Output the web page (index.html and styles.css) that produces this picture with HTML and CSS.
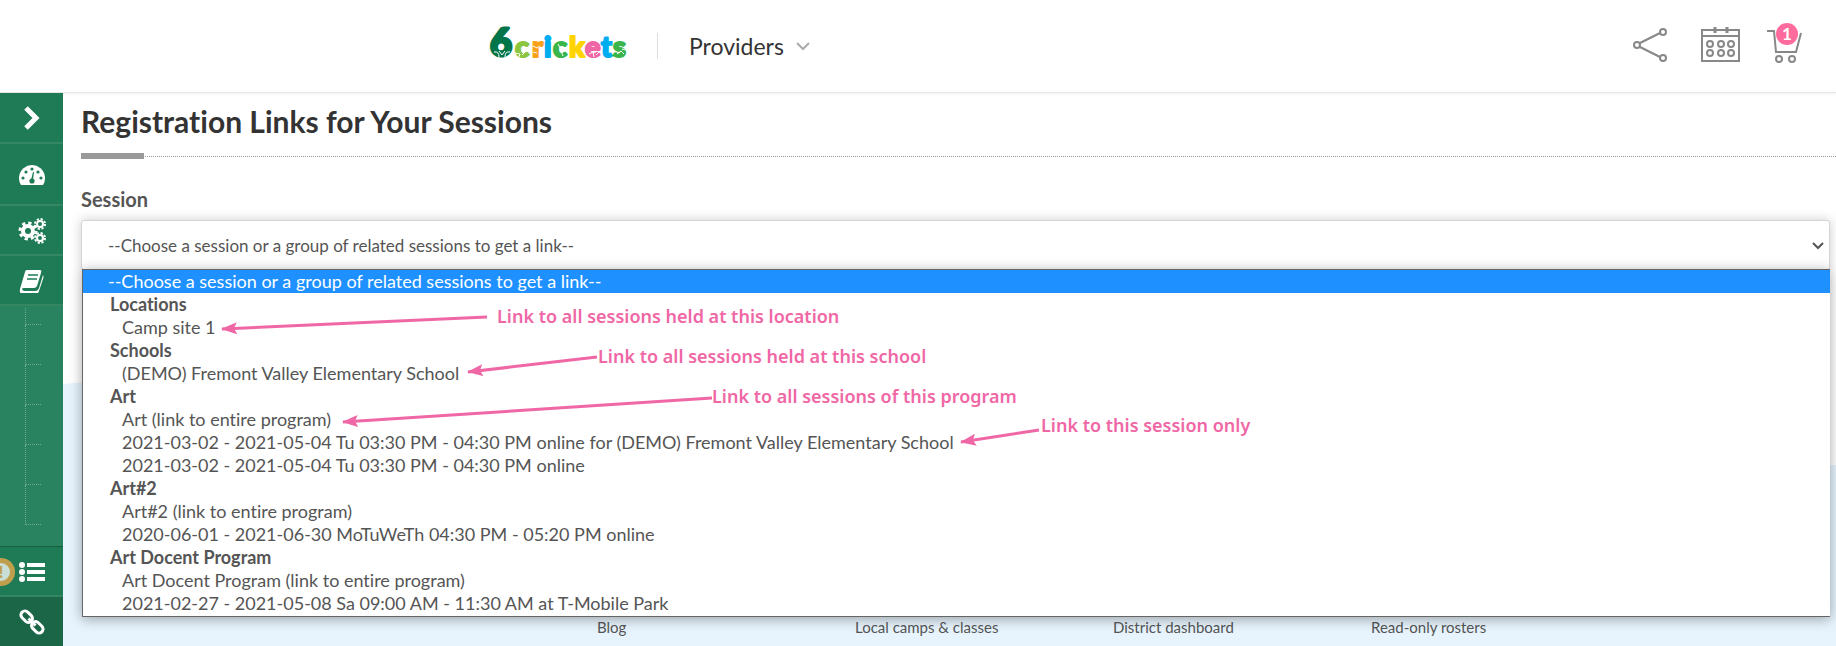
FILE: index.html
```
<!DOCTYPE html>
<html lang="en">
<head>
	<meta charset="utf-8">
	<title>Registration Links for Your Sessions</title>
	<link rel="stylesheet" href="styles.css">
</head>
<body>
<header class="header">
	<a class="logo" href="#" aria-label="6crickets">
		<svg width="138" height="50" viewBox="0 0 138 50">
			<g class="logo-text">
				<text class="logo-six" x="0" y="38">6</text>
				<text x="25" y="39" fill="#8cc63f" stroke="#8cc63f">c</text>
				<text x="42" y="39" fill="#f9a11b" stroke="#f9a11b">r</text>
				<text x="54" y="39" fill="#00aeef" stroke="#00aeef">i</text>
				<text x="63" y="39" fill="#39b54a" stroke="#39b54a">c</text>
				<text x="79" y="39" fill="#ffd400" stroke="#ffd400">k</text>
				<text x="95" y="39" fill="#f067a6" stroke="#f067a6">e</text>
				<text x="111" y="39" fill="#00aeef" stroke="#00aeef">t</text>
				<text x="123" y="39" fill="#39b54a" stroke="#39b54a">s</text>
			</g>
			<g fill="none" stroke="#fff" stroke-width="1">
				<path d="M4 34q5-1 5 5M20 34q-5-1-5 5M9 33l3 4 3-4M25 35l5 1-1 3M35 34l-3 3M43 28l4 2 3-2M43 34l4 1M68 26l2 4 4-1M71 33l2 5M99 36l4-2 1 5M106 37l3-3M127 36l4-3 3 3M132 31l4 1"/>
			</g>
		</svg>
	</a>
	<button class="nav-btn" type="button">Providers
		<svg width="14" height="9" viewBox="0 0 14 9"><path d="M1 1l6 6 6-6" fill="none" stroke="#aaa" stroke-width="2"/></svg>
	</button>
	<nav class="tools">
		<a href="#" aria-label="Share">
			<svg width="42" height="38" viewBox="0 0 42 38" fill="none" stroke="#888" stroke-width="2">
				<circle cx="6" cy="19" r="3"/><circle cx="32" cy="6" r="3"/><circle cx="32" cy="32" r="3"/>
				<path d="M9 17l20-10M9 21l20 10"/>
			</svg>
		</a>
		<a href="#" aria-label="Calendar">
			<svg width="40" height="38" viewBox="0 0 40 38" fill="none" stroke="#888" stroke-width="2">
				<path d="M2 4h37v31H2zM2 10h37"/>
				<path d="M15 1v6M27 1v6" stroke-width="3"/>
				<circle cx="10" cy="18" r="3"/><circle cx="21" cy="18" r="3"/><circle cx="31" cy="18" r="3"/>
				<circle cx="10" cy="27" r="3"/><circle cx="21" cy="27" r="3"/><circle cx="31" cy="27" r="3"/>
			</svg>
		</a>
		<a class="cart" href="#" aria-label="Cart">
			<svg width="36" height="38" viewBox="0 0 36 38" fill="none" stroke="#888" stroke-width="2">
				<path d="M0 5h7l2 21h20l5-19"/>
				<circle cx="12" cy="33" r="3"/><circle cx="25" cy="33" r="3"/>
			</svg>
			<span class="count">1</span>
		</a>
	</nav>
</header>

<div class="page">
	<aside class="sidebar">
		<a class="side-item side-first" href="#" aria-label="Expand">
			<svg width="18" height="24" viewBox="0 0 18 24"><path d="M3 2l10 10L3 22" fill="none" stroke="#fff" stroke-width="5"/></svg>
		</a>
		<a class="side-item side-tall" href="#" aria-label="Dashboard">
			<svg width="28" height="22" viewBox="0 0 28 22">
				<path fill="#fff" d="M3 21a13 13 0 1 1 22 0z"/>
				<g fill="#1e7b55"><circle cx="5" cy="14" r="1.6"/><circle cx="8" cy="8" r="1.6"/><circle cx="14" cy="5" r="1.6"/><circle cx="20" cy="8" r="1.6"/><circle cx="23" cy="14" r="1.6"/><circle cx="14" cy="17" r="2.6"/><path d="M13 16l2-8h1l-1 8z"/></g>
			</svg>
		</a>
		<a class="side-item" href="#" aria-label="Settings">
			<svg width="28" height="26" viewBox="0 0 28 26" fill="none" stroke="#fff">
				<circle cx="10" cy="13" r="5" stroke-width="4"/>
				<circle cx="10" cy="13" r="8" stroke-width="3" stroke-dasharray="3.3 2.98"/>
				<g stroke-width="2">
					<circle cx="22" cy="6" r="3"/><circle cx="22" cy="6" r="5" stroke-dasharray="2.2 1.73"/>
					<circle cx="22" cy="20" r="3"/><circle cx="22" cy="20" r="5" stroke-dasharray="2.2 1.73"/>
				</g>
			</svg>
		</a>
		<a class="side-item" href="#" aria-label="Programs">
			<svg width="26" height="24" viewBox="0 0 26 24">
				<path fill="#fff" d="M8 1h13q2 0 1 3l-4 13q-1 2-3 2H5q-2 0-2 1t2 2h12q2 0 3-3l4-13q1 2 0 4l-4 12q-1 3-3 3H4q-4 0-3-5L6 3q0-2 2-2z"/>
				<path d="M9 6h10M8 10h10" stroke="#1e7b55" stroke-width="1.5"/>
			</svg>
		</a>
		<ul class="sub">
			<li></li>
			<li></li>
			<li></li>
			<li></li>
			<li></li>
			<li></li>
		</ul>
		<a class="side-item side-list" href="#" aria-label="Lists">
			<svg width="28" height="22" viewBox="0 0 28 22" fill="#fff">
				<circle cx="4" cy="4" r="3"/><circle cx="4" cy="11" r="3"/><circle cx="4" cy="18" r="3"/>
				<path d="M9 2h18v4H9zM9 9h18v4H9zM9 16h18v4H9z"/>
			</svg>
			<span class="alert">!</span>
		</a>
		<a class="side-item side-active" href="#" aria-label="Links">
			<svg width="26" height="26" viewBox="0 0 26 26" fill="none" stroke="#fff" stroke-width="3">
				<g transform="rotate(45 13 13)"><rect x="-1" y="9" width="13" height="8" rx="4"/><rect x="14" y="9" width="13" height="8" rx="4"/><path d="M8 13h10"/></g>
			</svg>
		</a>
	</aside>

	<main class="main">
		<svg class="wave" viewBox="0 0 1773 264" preserveAspectRatio="none"><path fill="#e7f4fd" d="M0 2C300-30 1200 83 1773 83V264H0z"/></svg>
		<h1>Registration Links for Your Sessions</h1>
		<form class="field">
			<label for="session">Session</label>
			<div class="select-wrap">
				<select id="session">
					<option>--Choose a session or a group of related sessions to get a link--</option>
				</select>
				<svg class="arrow" width="12" height="8" viewBox="0 0 12 8"><path d="M1 1l5 5 5-5" fill="none" stroke="#555" stroke-width="2"/></svg>

				<div class="menu">
					<ul>
						<li class="opt on">--Choose a session or a group of related sessions to get a link--</li>
						<li class="group">Locations</li>
						<li class="opt">Camp site 1</li>
						<li class="group">Schools</li>
						<li class="opt">(DEMO) Fremont Valley Elementary School</li>
						<li class="group">Art</li>
						<li class="opt">Art (link to entire program)</li>
						<li class="opt">2021-03-02 - 2021-05-04 Tu 03:30 PM - 04:30 PM online for (DEMO) Fremont Valley Elementary School</li>
						<li class="opt">2021-03-02 - 2021-05-04 Tu 03:30 PM - 04:30 PM online</li>
						<li class="group">Art#2</li>
						<li class="opt">Art#2 (link to entire program)</li>
						<li class="opt">2020-06-01 - 2021-06-30 MoTuWeTh 04:30 PM - 05:20 PM online</li>
						<li class="group">Art Docent Program</li>
						<li class="opt">Art Docent Program (link to entire program)</li>
						<li class="opt">2021-02-27 - 2021-05-08 Sa 09:00 AM - 11:30 AM at T-Mobile Park</li>
					</ul>
					<!-- notes over the list -->
					<svg class="notes" width="1200" height="345" viewBox="0 0 1200 345">
						<defs>
							<marker id="tip" markerUnits="userSpaceOnUse" markerWidth="18" markerHeight="14" refX="15" refY="6" orient="auto">
								<path d="M0 0l16 6-16 6 3-6z" fill="#f067a6"/>
							</marker>
						</defs>
						<g stroke="#f067a6" stroke-width="3">
							<path d="M404 47L139 59" marker-end="url(#tip)"/>
							<path d="M514 87L385 102" marker-end="url(#tip)"/>
							<path d="M629 128L260 152" marker-end="url(#tip)"/>
							<path d="M956 160L878 172" marker-end="url(#tip)"/>
						</g>
						<text x="414" y="53">Link to all sessions held at this location</text>
						<text x="515" y="93">Link to all sessions held at this school</text>
						<text x="629" y="133">Link to all sessions of this program</text>
						<text x="958" y="162">Link to this session only</text>
					</svg>
				</div>
			</div>
		</form>
		<footer class="footer">
			<a href="#">Blog</a>
			<a href="#">Local camps &amp; classes</a>
			<a href="#">District dashboard</a>
			<a href="#">Read-only rosters</a>
		</footer>
	</main>
</div>
</body>
</html>
```
FILE: styles.css
```
*{
	box-sizing: border-box;
}
body,ul,li,h1{
	margin:0;
	padding:0;
}
li{
	list-style: none;
}
body{
	min-height:100vh;
	display: flex;
	flex-direction: column;
	font-family: Lato, "Liberation Sans", sans-serif;
	font-size:18px;
	font-variant-ligatures: none;
	color:#555;
	background: #fff;
}
a{
	color:inherit;
	text-decoration: none;
}
svg{
	display: block;
}

/* header */
.header{
	height:93px;
	flex:none;
	display: flex;
	align-items: center;
	padding:0 33px 0 490px;
	border-bottom: 1px solid #e6e6e6;
	box-shadow: 0 1px 3px rgba(0,0,0,0.06);
}
.logo{
	margin-bottom:6px;
}
.logo svg{
	overflow: visible;
}
.logo-text{
	font-size:29px;
	font-weight: 900;
	stroke-width:2px;
	stroke-linejoin: round;
}
.logo-six{
	font-size:38px;
	fill:#00754a;
	stroke:#00754a;
	stroke-width:3px;
}
.nav-btn{
	display: flex;
	align-items: center;
	gap:12px;
	height:26px;
	margin-left:29px;
	padding:0 0 0 31px;
	border:0;
	border-left:1px solid #ddd;
	background: none;
	font-family: inherit;
	font-size:23px;
	color:#333;
}
.tools{
	display: flex;
	align-items: center;
	gap:27px;
	margin:0 0 2px auto;
}
.cart{
	position: relative;
}
.count{
	position: absolute;
	top:-3px;
	left:9px;
	width:22px;
	height:22px;
	border-radius: 50%;
	background: #ff6b9d;
	color:#fff;
	font-size:17px;
	font-weight: bold;
	line-height: 22px;
	text-align: center;
}

/* sidebar */
.page{
	flex:1;
	display: flex;
}
.sidebar{
	width:63px;
	flex:none;
	display: flex;
	flex-direction: column;
	background: #1e7b55;
}
.side-item{
	position: relative;
	height:50px;
	flex:none;
	display: flex;
	align-items: center;
	justify-content: center;
	padding-top:2px;
	border-bottom: 2px solid #348762;
}
.side-first{
	height:51px;
	padding:0;
}
.side-tall{
	height:62px;
}
.sub{
	height:241px;
	padding:2px 0 0 25px;
	background: #2a8360;
	border-bottom: 1px solid #17603f;
}
.sub li{
	width:16px;
	height:40px;
	border-left:1px dotted #6fab93;
	border-bottom:1px dotted #6fab93;
}
.sub li:first-child{
	height:17px;
}
.side-list{
	overflow: hidden;
}
.alert{
	position: absolute;
	left:-13px;
	top:11px;
	width:28px;
	height:28px;
	border:5px solid #bf9f4b;
	border-radius: 50%;
	background: #c9dfd5;
	color:#bf9f4b;
	font-size:17px;
	font-weight: 900;
	line-height: 18px;
	text-align: center;
}
.side-active{
	flex:1;
	padding:0;
	border:0;
	background: #1a6647;
}

/* content */
.main{
	position: relative;
	flex:1;
	display: flex;
	flex-direction: column;
	padding-left:18px;
}
.wave{
	position: absolute;
	left:0;
	bottom:0;
	width:100%;
	height:264px;
}
h1{
	position: relative;
	padding:9px 0 16px;
	border-bottom: 1px dotted #999;
	font-size:30px;
	font-weight: bold;
	line-height: 38px;
	color:#333;
}
h1::after{
	content:"";
	position: absolute;
	left:0;
	bottom:-3px;
	width:63px;
	height:6px;
	background: #999;
}
.field{
	padding-right:6px;
}
.field label{
	display: block;
	margin:30px 0 8px;
	font-size:20px;
	font-weight: bold;
	line-height: 25px;
}
.select-wrap{
	position: relative;
}
select{
	display: block;
	width:100%;
	height:50px;
	padding:0 26px;
	border:1px solid #d5d5d5;
	border-radius: 3px;
	box-shadow: 0 0 12px rgba(0,0,0,0.2);
	background: #fff;
	appearance: none;
	font-family: inherit;
	font-size:17px;
	color:#555;
}
.arrow{
	position: absolute;
	right:6px;
	top:22px;
}
.menu{
	position: absolute;
	z-index: 2;
	top:49px;
	left:1px;
	right:0;
	padding-bottom:1px;
	border:1px solid #666;
	border-right:0;
	background: #fff;
	box-shadow: 0 2px 12px rgba(0,0,0,0.35);
	line-height: 23px;
	white-space: nowrap;
}
.group{
	padding-left:27px;
	font-weight: bold;
}
.opt{
	padding-left:39px;
}
.on{
	padding-left:25px;
	background: #1e90ff;
	color:#fff;
}
.notes{
	position: absolute;
	left:0;
	top:0;
}
.notes text{
	fill:#f067a6;
	font-family: "Noto Sans", "Noto Sans CJK KR", sans-serif;
	font-size:18px;
	font-weight: 600;
}

/* footer */
.footer{
	position: relative;
	display: grid;
	grid-template-columns: repeat(4, 258px);
	margin:auto 0 9px 516px;
	font-size:15px;
	line-height: 20px;
}
```
